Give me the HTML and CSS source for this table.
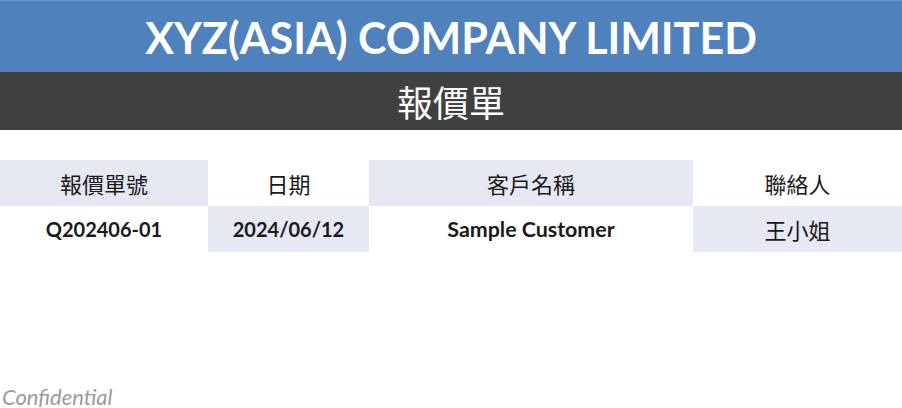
FILE: index.html
```html
<!DOCTYPE html>
<html lang="zh-Hant">
<head>
<meta charset="utf-8">
<link rel="stylesheet" href="styles.css">
</head>
<body>
<div class="page">
  <header class="company">XYZ(ASIA) COMPANY LIMITED</header>
  <div class="doc-title">報價單</div>
  <div class="info">
    <div class="cell shade">報價單號</div>
    <div class="cell">日期</div>
    <div class="cell shade">客戶名稱</div>
    <div class="cell">聯絡人</div>
    <div class="cell val">Q202406-01</div>
    <div class="cell val shade">2024/06/12</div>
    <div class="cell val val-wide">Sample Customer</div>
    <div class="cell shade">王小姐</div>
  </div>
  <div class="spacer"></div>
  <footer class="confidential">Confidential</footer>
</div>
</body>
</html>
```
FILE: styles.css
```css
html, body {
  margin: 0;
  padding: 0;
  background: #ffffff;
}
body {
  font-family: Lato, "Noto Sans CJK TC", sans-serif;
  color: #1a1a1a;
}
.page {
  width: 902px;
  height: 408px;
  display: flex;
  flex-direction: column;
  overflow: hidden;
}
.company {
  height: 71px;
  border-top: 1px solid #6e97cb;
  background: #4f81bd;
  color: #ffffff;
  font-weight: 700;
  font-size: 43px;
  display: flex;
  align-items: center;
  justify-content: center;
  padding-top: 1px;
  box-sizing: border-box;
  height: 72px;
}
.doc-title {
  height: 58px;
  background: #404040;
  color: #ffffff;
  font-size: 36px;
  display: flex;
  align-items: center;
  justify-content: center;
}
.info {
  margin-top: 30px;
  display: grid;
  grid-template-columns: 208px 161px 324px 209px;
  grid-auto-rows: 46px;
}
.cell {
  display: flex;
  align-items: center;
  justify-content: center;
  font-size: 22px;
}
.shade {
  background: #e6e8f4;
}
.val {
  font-weight: 700;
  font-size: 20px;
}
.val-wide {
  font-size: 21.4px;
}
.spacer {
  flex: 1;
}
.confidential {
  flex: none;
  font-style: italic;
  color: #9a9a9a;
  font-size: 22px;
  padding-left: 2px;
  height: 22px;
  line-height: 22px;
}
```
